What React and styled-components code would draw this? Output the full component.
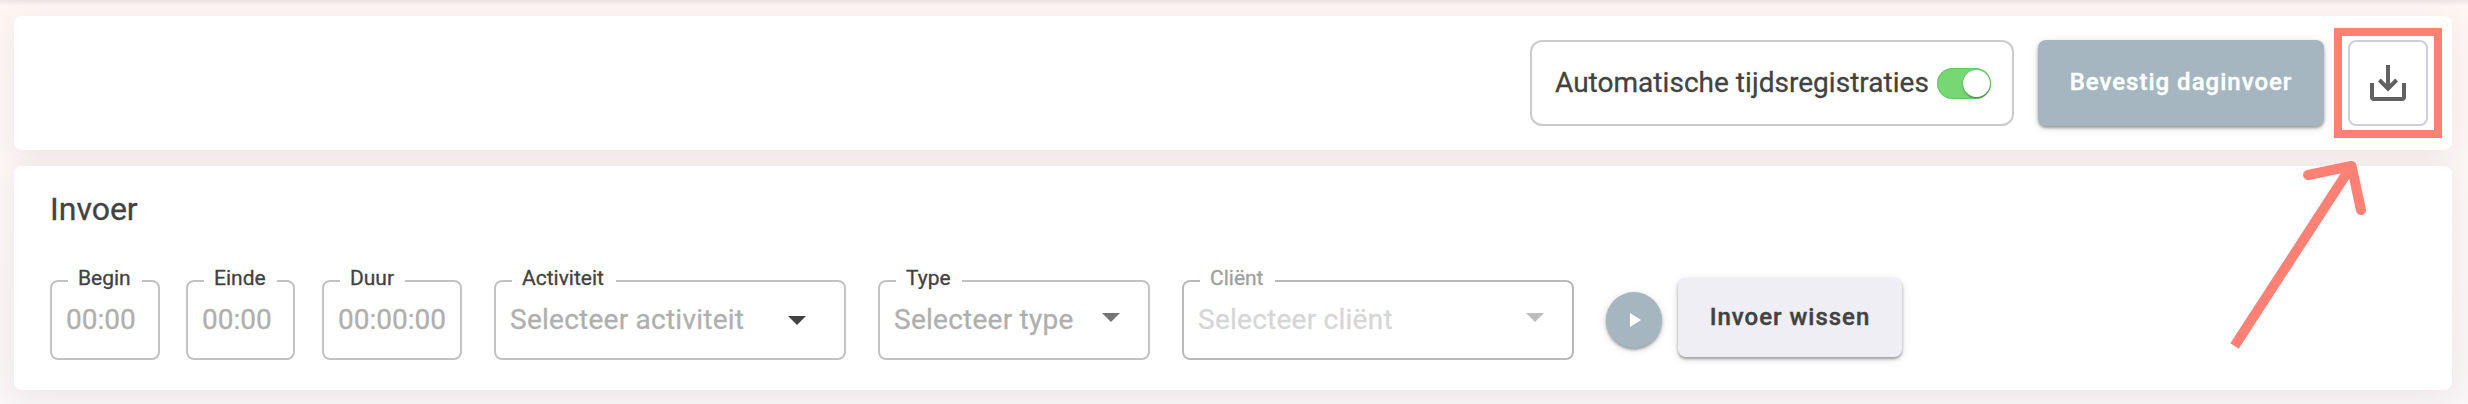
import React from "react";
import styled, { createGlobalStyle } from "styled-components";

const GlobalStyle = createGlobalStyle`
  *, *::before, *::after { box-sizing: border-box; }
  body {
    margin: 0;
    background: #fcf6f4;
    color: #424242;
    font-family: Roboto, "Liberation Sans", sans-serif;
    -webkit-text-stroke: 0.3px currentColor;
  }
`;

const Page = styled.main`
  position: relative;
  height: 404px;
  padding: 16px 16px 0 14px;
  display: flex;
  flex-direction: column;
  gap: 16px;
  overflow: hidden;
  background:
    linear-gradient(rgba(60, 40, 50, 0.09), rgba(60, 40, 50, 0)) 0 0 / 100% 6px no-repeat,
    linear-gradient(#fdf6f3, #faf5f6);
`;

const Card = styled.section`
  background: #fff;
  border-radius: 8px;
  box-shadow: 0 8px 32px rgba(50, 40, 60, 0.07);
`;

const ActionBar = styled(Card)`
  height: 134px;
  padding: 24px 24px 24px 0;
  display: flex;
  justify-content: flex-end;
`;

const EntryCard = styled(Card)`
  height: 224px;
  padding: 24px 36px 0;
`;

const ToggleBox = styled.label`
  width: 484px;
  height: 86px;
  margin-right: 24px;
  padding: 0 21px 0 23px;
  border: 2px solid #cbcbcb;
  border-radius: 12px;
  display: flex;
  align-items: center;
  justify-content: space-between;
  font-size: 28px;
  letter-spacing: 0.03px;
  white-space: nowrap;
`;

const ToggleText = styled.span`
  padding-bottom: 2px;
`;

const Switch = styled.span`
  width: 54px;
  height: 31px;
  padding: 2px 1px;
  border-radius: 16px;
  background: #76d873;
  box-shadow: inset 0 0 2px rgba(0, 0, 0, 0.3);
  display: flex;
  justify-content: flex-end;
`;

const Knob = styled.span`
  width: 27px;
  height: 27px;
  border-radius: 50%;
  background: #fff;
  box-shadow: 0 1px 2px rgba(0, 0, 0, 0.45);
`;

const Button = styled.button`
  width: ${(p) => p.$width}px;
  height: ${(p) => p.$height}px;
  padding: 0 0 ${(p) => p.$lift || 0}px;
  border: 0;
  border-radius: 8px;
  background: ${(p) => (p.$primary ? "#a5b6c0" : "#efeef4")};
  color: ${(p) => (p.$primary ? "#fff" : "#424242")};
  font: 500 24px Roboto, "Liberation Sans", sans-serif;
  -webkit-text-stroke: 0.4px currentColor;
  letter-spacing: ${(p) => p.$tracking}px;
  white-space: nowrap;
  box-shadow: 0 2px 3px rgba(0, 0, 0, 0.34), 0 2px 10px rgba(0, 0, 0, 0.12);
`;

const Highlight = styled.div`
  width: 108px;
  height: 110px;
  margin: -12px -14px 0 10px;
  border: 8px solid #ff8075;
  padding: 4px 6px;
`;

const IconButton = styled.button`
  display: flex;
  align-items: center;
  justify-content: center;
  width: 80px;
  height: 86px;
  padding: 0;
  background: #fff;
  border: 2px solid #d0cde0;
  border-radius: 8px;
`;

const Title = styled.h2`
  margin: 0;
  height: 38px;
  font-size: 32px;
  line-height: 38px;
  font-weight: 400;
`;

const FieldRow = styled.div`
  display: flex;
  margin-top: 50px;
`;

const Field = styled.fieldset`
  width: ${(p) => p.$width}px;
  height: 80px;
  min-width: 0;
  margin: 2px ${(p) => p.$gap}px 0 0;
  padding: 0 0 0 14px;
  border: 2px solid ${(p) => (p.$disabled ? "#bababa" : "#c2c2c2")};
  border-radius: 8px;
`;

const Legend = styled.legend`
  width: ${(p) => p.$width}px;
  height: 2px;
  margin-left: 2px;
  padding: 0 0 0 10px;
  font-size: 21px;
  line-height: 24px;
  white-space: nowrap;
  color: ${(p) => (p.$disabled ? "#9e9e9e" : "#424242")};
`;

const LegendText = styled.span`
  display: block;
  margin-top: -14px;
`;

const FieldBody = styled.div`
  height: 66px;
  padding-right: ${(p) => p.$end}px;
  display: flex;
  align-items: center;
  justify-content: space-between;
  font-size: 28px;
  line-height: 32px;
  letter-spacing: ${(p) => p.$tracking || 0}px;
  white-space: nowrap;
  color: ${(p) => (p.$disabled ? "#d6d6d6" : "#afafaf")};
`;

const Placeholder = styled.span`
  padding-top: 9px;
`;

const Caret = styled.span`
  margin-top: ${(p) => p.$drop}px;
  border: 9px solid transparent;
  border-bottom-width: 0;
  border-top-color: ${(p) => p.$color};
`;

const PlayButton = styled.button`
  width: 56px;
  height: 56px;
  margin: 14px 16px 0 0;
  padding: 0;
  border: 0;
  border-radius: 50%;
  background: #a5b6c0;
  box-shadow: 0 2px 3px rgba(0, 0, 0, 0.34), 0 2px 10px rgba(0, 0, 0, 0.12);
  display: flex;
`;

const Pointer = styled.svg`
  position: absolute;
  left: 2220px;
  top: 150px;
  pointer-events: none;
`;

const fields = [
  { label: "Begin", value: "00:00", width: 110, notch: 74, gap: 26 },
  { label: "Einde", value: "00:00", width: 109, notch: 73, gap: 27 },
  { label: "Duur", value: "00:00:00", width: 140, notch: 65, gap: 32 },
  { label: "Activiteit", value: "Selecteer activiteit", width: 352, notch: 104, gap: 32, caret: "#424242", end: 38, drop: 10, tracking: 0.25 },
  { label: "Type", value: "Selecteer type", width: 272, notch: 66, gap: 32, caret: "#757575", end: 28, drop: 4, tracking: 0.25 },
  { label: "Cliënt", value: "Selecteer cliënt", width: 392, notch: 75, gap: 32, caret: "#bdbdbd", end: 28, drop: 4, tracking: 0.25, disabled: true },
];

export default function App() {
  return (
    <Page>
      <GlobalStyle />
      <ActionBar>
        <ToggleBox>
          <ToggleText>Automatische tijdsregistraties</ToggleText>
          <Switch role="switch" aria-checked="true"><Knob /></Switch>
        </ToggleBox>
        <Button $primary $width={286} $height={86} $lift={2} $tracking={1}>Bevestig daginvoer</Button>
        <Highlight>
          <IconButton aria-label="Download">
            <svg width="36" height="36" viewBox="0 0 36 36" fill="none" stroke="#616161" strokeWidth="4">
              <path d="M2 18v14a2 2 0 0 0 2 2h28a2 2 0 0 0 2-2V18" />
              <path d="M18 0v23M9.4 15l8.6 8.6 8.6-8.6" />
            </svg>
          </IconButton>
        </Highlight>
      </ActionBar>
      <EntryCard>
        <Title>Invoer</Title>
        <FieldRow>
          {fields.map((f) => (
            <Field key={f.label} $width={f.width} $gap={f.gap} $disabled={f.disabled}>
              <Legend $width={f.notch} $disabled={f.disabled}>
                <LegendText>{f.label}</LegendText>
              </Legend>
              <FieldBody $end={f.end || 0} $disabled={f.disabled} $tracking={f.tracking}>
                <Placeholder>{f.value}</Placeholder>
                {f.caret && <Caret $color={f.caret} $drop={f.drop} />}
              </FieldBody>
            </Field>
          ))}
          <PlayButton aria-label="Start">
            <svg width="56" height="56" viewBox="0 0 56 56" fill="#fff">
              <path d="M24 21v14l11-7z" />
            </svg>
          </PlayButton>
          <Button $width={224} $height={79} $lift={2} $tracking={1}>Invoer wissen</Button>
        </FieldRow>
      </EntryCard>
      <Pointer width="150" height="204" viewBox="2220 150 150 204" fill="none" stroke="#ff8075" strokeWidth="10">
        <path d="M2234.5 346L2351.5 166" />
        <path d="M2308 175L2351.5 166L2361 210" strokeLinecap="round" strokeLinejoin="round" />
      </Pointer>
    </Page>
  );
}
